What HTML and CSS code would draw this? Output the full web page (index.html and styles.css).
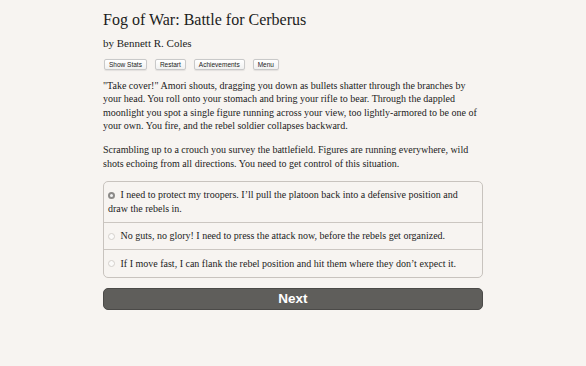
FILE: index.html
```html
<!DOCTYPE html>
<html lang="en">
<head>
  <meta charset="UTF-8">
  <meta name="viewport" content="width=device-width, initial-scale=1.0">
  <title>Fog of War: Battle for Cerberus</title>
  <link rel="stylesheet" href="styles.css">
</head>
<body>
  <div class="container">
    <h1 class="title">Fog of War: Battle for Cerberus</h1>
    <h2 class="author">by Bennett R. Coles</h2>

    <div class="buttons">
      <button class="spaced">Show Stats</button>
      <button class="spaced">Restart</button>
      <button class="spaced">Achievements</button>
      <button class="spaced">Menu</button>
    </div>

    <div class="story">
      <p>"Take cover!" Amori shouts, dragging you down as bullets shatter through the branches by your head. You roll onto your stomach and bring your rifle to bear. Through the dappled moonlight you spot a single figure running across your view, too lightly-armored to be one of your own. You fire, and the rebel soldier collapses backward.</p>
      <p>Scrambling up to a crouch you survey the battlefield. Figures are running everywhere, wild shots echoing from all directions. You need to get control of this situation.</p>
    </div>

    <form class="choices">
      <label class="choice">
        <input type="radio" name="choice" value="0" checked>
        I need to protect my troopers. I’ll pull the platoon back into a defensive position and draw the rebels in.
      </label>
      <label class="choice">
        <input type="radio" name="choice" value="1">
        No guts, no glory! I need to press the attack now, before the rebels get organized.
      </label>
      <label class="choice">
        <input type="radio" name="choice" value="2">
        If I move fast, I can flank the rebel position and hit them where they don’t expect it.
      </label>
    </form>

    <button class="next">Next</button>
  </div>
</body>
</html>
```

FILE: styles.css
```css
body {
  margin: 0;
  background-color: #f7f4f1;
  color: #1c1c1c;
  font-family: "Palatino Linotype", "Book Antiqua", Palatino, "Liberation Serif", serif;
}
.container {
  width: 380px;
  margin: 0 auto;
  padding-top: 10.5px;
}
.title {
  margin: 0;
  font-size: 16px;
  line-height: 18px;
  font-weight: normal;
}
.author {
  margin: 7.8px 0 0;
  font-size: 11px;
  line-height: 14px;
  font-weight: normal;
}
.buttons {
  display: flex;
  gap: 8px;
  margin-top: 8.5px;
  padding-left: 1px;
}
button.spaced {
  height: 11px;
  padding: 0 4px;
  font-family: "Liberation Sans", Arial, sans-serif;
  font-size: 6.5px;
  line-height: 9px;
  color: #222;
  background: linear-gradient(#ffffff, #f1f1f1);
  border: 1px solid #c9c9c9;
  border-radius: 2px;
  box-shadow: 0 0.5px 1px rgba(0, 0, 0, 0.08);
}
.story {
  margin-top: 9px;
  font-size: 10px;
  line-height: 13.5px;
}
.story p {
  margin: 0 0 10.5px;
}
.choices {
  margin-top: 10px;
  border: 1px solid #c8c3be;
  border-radius: 5px;
  font-size: 10px;
  line-height: 13.5px;
}
.choice {
  display: block;
  padding: 6.5px 4px;
  border-top: 1px solid #cbc6c1;
}
.choice:first-child {
  border-top: none;
}
.choice input {
  appearance: none;
  width: 7px;
  height: 7px;
  margin: 0 3px 0 0;
  vertical-align: -0.5px;
  border: 1px solid #d4d0cc;
  border-radius: 50%;
  background: #fbfaf9;
  box-sizing: border-box;
}
.choice input:checked {
  border: 2px solid #8c8a88;
  background: #f2f2f2;
}
button.next {
  display: block;
  width: 100%;
  height: 22px;
  margin-top: 10px;
  background-color: #5f5e5b;
  border: 1px solid #4b4a48;
  border-radius: 5px;
  color: #fff;
  font-family: "Liberation Sans", Arial, sans-serif;
  font-size: 13.5px;
  font-weight: bold;
}
```
